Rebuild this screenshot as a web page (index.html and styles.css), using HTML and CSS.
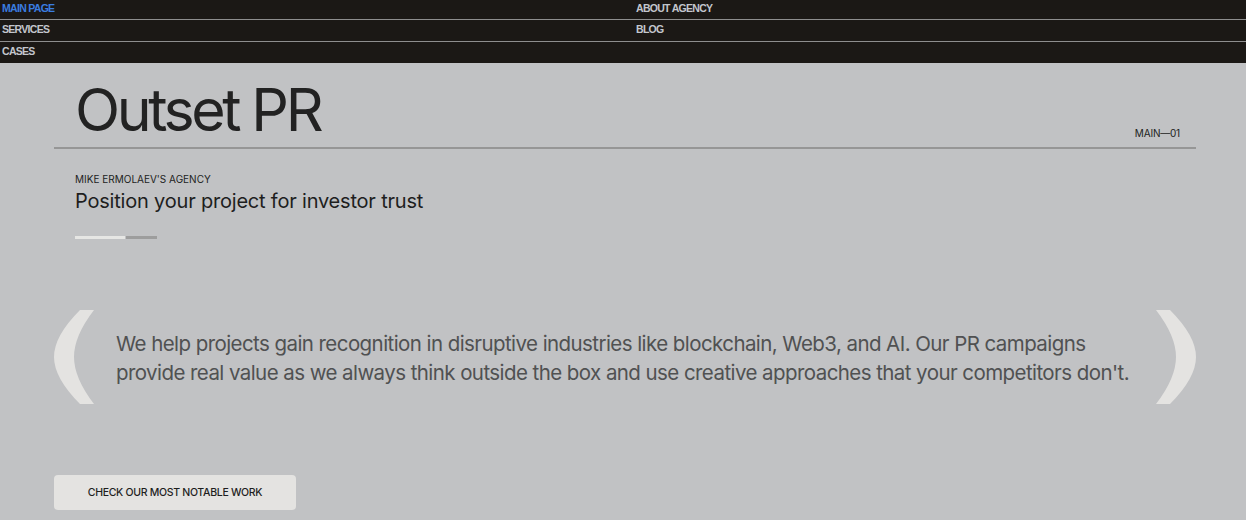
FILE: index.html
```html
<!DOCTYPE html>
<html lang="en">
<head>
<meta charset="utf-8">
<title>Outset PR</title>
<link rel="stylesheet" href="styles.css">
</head>
<body>
<nav class="nav">
  <a class="nav-item active" href="#">MAIN PAGE</a>
  <a class="nav-item right" href="#">ABOUT AGENCY</a>
  <a class="nav-item" href="#">SERVICES</a>
  <a class="nav-item right" href="#">BLOG</a>
  <a class="nav-item last" href="#">CASES</a>
  <span class="nav-item right last"></span>
</nav>
<main class="page">
  <header class="hero-head">
    <h1 class="title">Outset PR</h1>
    <span class="tag">MAIN—01</span>
  </header>
  <section class="intro">
    <p class="eyebrow">MIKE ERMOLAEV'S AGENCY</p>
    <h2 class="subtitle">Position your project for investor trust</h2>
    <div class="progress"><span class="progress-fill"></span><span class="progress-rest"></span></div>
  </section>
  <section class="quote">
    <svg class="paren" viewBox="0 0 40 94" width="40" height="94" aria-hidden="true"><path d="M40 0 L26 0 Q0 26 0 47 Q0 68 26 94 L40 94 Q20 68 20 47 Q20 26 40 0 Z" fill="#e4e3e1"/></svg>
    <p class="quote-text">We help projects gain recognition in disruptive industries like blockchain, Web3, and AI. Our PR campaigns provide real value as we always think outside the box and use creative approaches that your competitors don't.</p>
    <svg class="paren" viewBox="0 0 40 94" width="40" height="94" aria-hidden="true"><path d="M0 0 L14 0 Q40 26 40 47 Q40 68 14 94 L0 94 Q20 68 20 47 Q20 26 0 0 Z" fill="#e4e3e1"/></svg>
  </section>
  <div class="cta-row">
    <a class="cta" href="#">CHECK OUR MOST NOTABLE WORK</a>
  </div>
</main>
</body>
</html>
```
FILE: styles.css
```css
* { box-sizing: border-box; }
html, body { margin: 0; padding: 0; }
body {
  background: #c1c2c4;
  font-family: Inter, "Noto Sans", sans-serif;
  color: #1e1e1e;
  height: 520px;
  overflow: hidden;
}
.nav {
  display: grid;
  grid-template-columns: 623px 1fr;
  background: #1b1815;
}
.nav-item {
  display: block;
  height: 21px;
  padding: 2px 0 0 2px;
  font-family: "Liberation Sans", Arial, sans-serif;
  font-size: 10.5px;
  font-weight: 700;
  letter-spacing: -0.7px;
  line-height: 13px;
  color: #c3c6cd;
  text-decoration: none;
  border-bottom: 1px solid #8e8e8e;
}
.nav-item:nth-child(1), .nav-item:nth-child(2) { height: 20px; }
.nav-item:nth-child(3), .nav-item:nth-child(4) { height: 22px; padding-top: 3px; }
.nav-item.right { padding-left: 13px; }
.nav-item.last { border-bottom: none; height: 21px; padding-top: 3px; }
.nav-item.active { color: #3a7de0; }
.page { padding: 0 50px 0 54px; }
.hero-head {
  display: flex;
  justify-content: space-between;
  align-items: flex-end;
  border-bottom: 2px solid #969696;
  padding: 16px 16px 7px 21px;
  height: 86px;
}
.title {
  margin: 0;
  font-size: 59px;
  font-weight: 400;
  letter-spacing: -3.4px;
  line-height: 60px;
  color: #222;
}
.tag {
  font-size: 10px;
  letter-spacing: -0.2px;
  color: #222;
  padding-bottom: 1px;
}
.intro { padding: 24px 0 0 21px; }
.eyebrow {
  margin: 0;
  font-size: 10px;
  letter-spacing: 0;
  line-height: 12px;
  color: #222;
}
.subtitle {
  margin: 4px 0 0;
  font-size: 20px;
  font-weight: 400;
  letter-spacing: -0.2px;
  line-height: 24px;
  color: #1e1e1e;
}
.progress {
  display: flex;
  margin-top: 23px;
  height: 3px;
  width: 82px;
}
.progress-fill { width: 50px; background: #e6e6e4; }
.progress-rest { width: 31px; margin-left: 1px; background: #9d9d9d; }
.quote {
  display: flex;
  align-items: center;
  justify-content: space-between;
  margin-top: 71px;
  height: 94px;
}
.paren { flex: none; display: block; }
.quote-text {
  flex: 1;
  margin: 2px 0 0 22px;
  font-size: 20.5px;
  line-height: 29px;
  letter-spacing: -0.57px;
  color: #505152;
}
.cta-row { margin-top: 71px; display: flex; }
.cta {
  display: flex;
  align-items: center;
  justify-content: center;
  width: 242px;
  height: 35px;
  background: #e4e3e1;
  border-radius: 4px;
  font-size: 10.5px;
  font-weight: 500;
  letter-spacing: -0.3px;
  color: #1e1e1e;
  text-decoration: none;
}
```
